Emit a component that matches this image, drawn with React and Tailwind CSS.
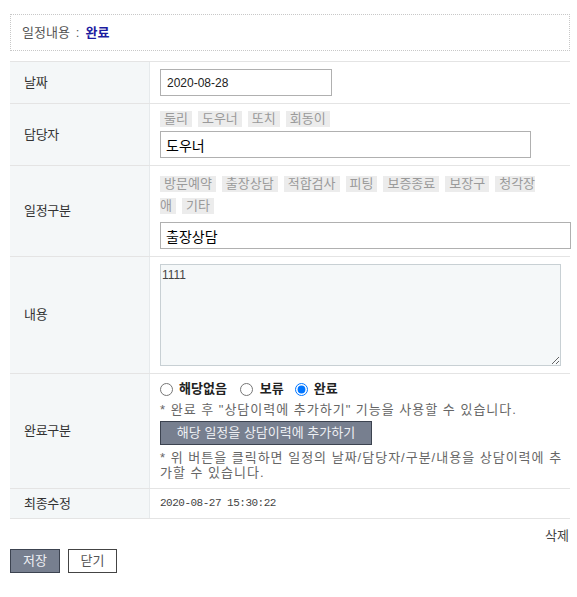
import React from "react";

const tagCls = "inline-block align-top leading-[16px] my-[3px] bg-[#ececec] text-[#9a9a9a] mr-[6px]";

function Tags({ items }) {
  return items.map((t) => {
    const text = typeof t === "string" ? t : t.text;
    const pad = typeof t === "string" ? "px-[4px]" : t.pad;
    return (
      <span key={text} className={`${tagCls} ${pad}`}>
        {text}
      </span>
    );
  });
}

function Row({ label, h, children, center = true, pad = "" }) {
  return (
    <div className={`flex border-b border-[#e4e4e4] ${h}`}>
      <div className="w-[140px] shrink-0 bg-[#f4f7f8] border-r border-[#e6eaec] flex items-center pl-[14px] text-[13px] text-[#333] tracking-[-0.3px]">
        {label}
      </div>
      <div className={`flex-1 pl-[10px] flex flex-col ${center ? "justify-center" : ""} ${pad}`}>
        {children}
      </div>
    </div>
  );
}

export default function App() {
  return (
    <div className="w-[577px] min-h-[597px] bg-white px-[10px] pt-[14px] font-['Liberation_Sans','Noto_Sans_CJK_KR',sans-serif] text-[#333]">
      <div className="h-[37px] w-[560px] border border-dotted border-[#c8c8c8] flex items-center pl-[11px] text-[13px] text-[#555]">
        <span>일정내용</span>
        <span className="mx-[6px]">:</span>
        <span className="text-[#1c1ca0] font-bold">완료</span>
      </div>

      <div className="mt-[10px] w-[560px] border-t border-[#e4e4e4]">
        <Row label="날짜" h="h-[42px]">
          <input
            readOnly
            value="2020-08-28"
            className="w-[172px] h-[27px] border border-[#b0b0b0] pl-[6px] text-[12px] text-[#222] outline-none"
          />
        </Row>

        <Row label="담당자" h="h-[62px]" center={false} pad="pt-[4px]">
          <div className="leading-[22px] text-[13px]">
            <Tags items={["둘리", "도우너", "또치", "회동이"]} />
          </div>
          <input
            readOnly
            value="도우너"
            className="mt-[1px] w-[371px] h-[27px] border border-[#b0b0b0] pl-[5px] text-[14px] text-black outline-none"
          />
        </Row>

        <Row label="일정구분" h="h-[91px]" center={false} pad="pt-[7px]">
          <div className="w-[385px] leading-[22px] text-[13px]">
            <Tags
              items={[
                "방문예약",
                "출장상담",
                "적합검사",
                "피팅",
                "보증종료",
                "보장구",
                { text: "청각장", pad: "pl-[4px]" },
                { text: "애", pad: "pr-[4px]" },
                "기타",
              ]}
            />
          </div>
          <input
            readOnly
            value="출장상담"
            className="mt-[5px] w-[411px] h-[27px] border border-[#b0b0b0] pl-[5px] text-[14px] text-black outline-none"
          />
        </Row>

        <Row label="내용" h="h-[117px]">
          <textarea
            readOnly
            value="1111"
            className="w-[401px] h-[102px] bg-[#f5f8f9] border border-[#c8d0d4] p-[1px] text-[12px] text-[#444] outline-none"
          />
        </Row>

        <Row label="완료구분" h="h-[115px]" center={false} pad="pt-[4px]">
          <div className="h-[22px] flex items-center text-[13px] text-[#222] font-bold">
            <label className="flex items-center">
              <input type="radio" name="done" className="m-0 w-[13px] h-[13px]" />
              <span className="ml-[6px]">해당없음</span>
            </label>
            <label className="flex items-center ml-[13px]">
              <input type="radio" name="done" className="m-0 w-[13px] h-[13px]" />
              <span className="ml-[7px]">보류</span>
            </label>
            <label className="flex items-center ml-[11px]">
              <input type="radio" name="done" defaultChecked className="m-0 w-[13px] h-[13px]" />
              <span className="ml-[6px]">완료</span>
            </label>
          </div>
          <div className="mt-[1px] leading-[18px] text-[13px] text-[#666] tracking-[1px] whitespace-nowrap">
            * 완료 후 "상담이력에 추가하기" 기능을 사용할 수 있습니다.
          </div>
          <button className="mt-[2px] w-[212px] h-[24px] bg-[#777f8f] border border-[#3c4350] text-[#eef0f4] text-[13px] text-center">
            해당 일정을 상담이력에 추가하기
          </button>
          <div className="mt-[5px] leading-[15px] text-[13px] text-[#666] tracking-[1px]">
            <div className="whitespace-nowrap">* 위 버튼을 클릭하면 일정의 날짜/담당자/구분/내용을 상담이력에 추</div>
            <div className="whitespace-nowrap">가할 수 있습니다.</div>
          </div>
        </Row>

        <Row label="최종수정" h="h-[30px]">
          <span className="font-['Liberation_Mono',monospace] text-[11px] tracking-[-0.5px] text-[#444]">
            2020-08-27 15:30:22
          </span>
        </Row>
      </div>

      <div className="w-[560px] mt-[9px] leading-[16px] text-right text-[13px] text-[#444] pr-[1px]">삭제</div>

      <div className="mt-[5px] flex gap-[8px]">
        <button className="w-[50px] h-[24px] bg-[#777f8f] border border-[#3c4350] text-[#eef0f4] text-[13px]">
          저장
        </button>
        <button className="w-[49px] h-[24px] bg-white border border-[#444] text-[#555] text-[13px]">
          닫기
        </button>
      </div>
    </div>
  );
}
